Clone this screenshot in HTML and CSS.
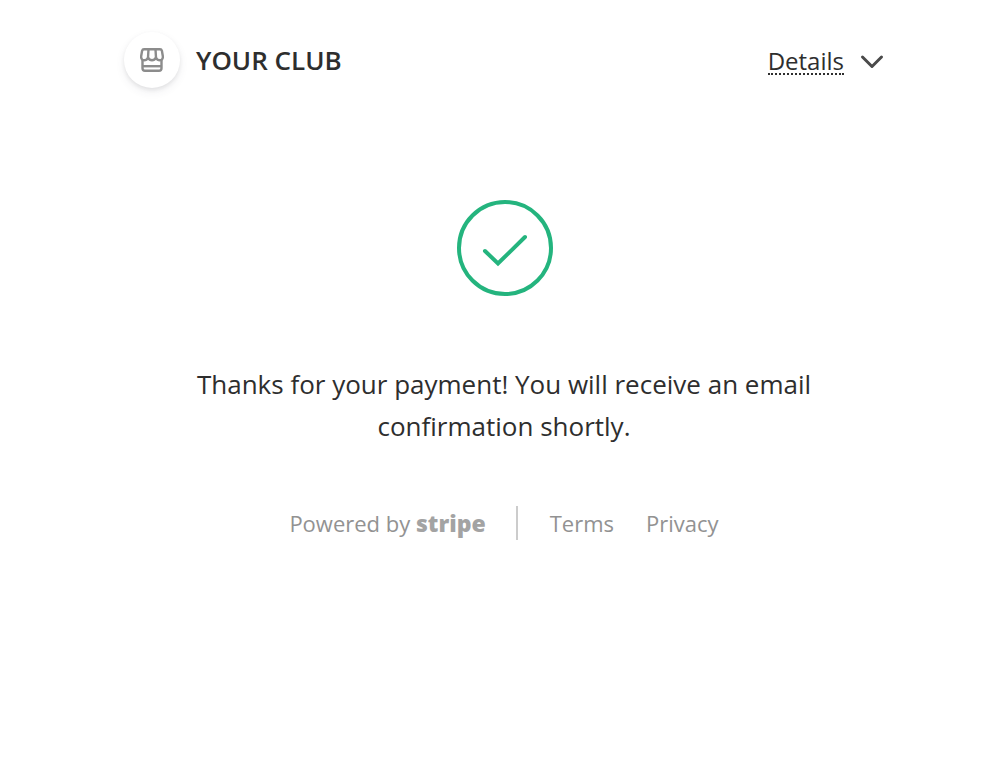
FILE: index.html
```
<!DOCTYPE html>
<html lang="en">

<head>
  <meta charset="UTF-8">
  <meta name="viewport" content="width=device-width, initial-scale=1.0">
  <title>Payment complete</title>

  <link rel="stylesheet" href="styles.css">
</head>

<body>
  <div class="container">
    <header class="header">
      <div class="business">
        <div class="business-icon">
          <svg width="24" height="24" viewBox="0 0 24 24" fill="none" stroke="#8c8c8c" stroke-width="2.400" stroke-linejoin="round">
            <path d="M4 1.200h16q1.500 0 1.900 1.500L22.800 8c.4 2.500-1 4.300-2.900 4.300-1.700 0-3.100-1-3.900-2.600-.9 1.600-2.300 2.600-4 2.600s-3.100-1-4-2.600c-.8 1.600-2.200 2.600-3.900 2.600-1.900 0-3.300-1.800-2.900-4.300l.9-5.300Q2.500 1.200 4 1.200z" />
            <path d="M8.500 1.200L8 9.700M15.500 1.200l.5 8.500" />
            <path d="M2.500 12v8.300q0 2.500 2.500 2.500h14q2.500 0 2.500-2.500V12" />
            <path d="M2.500 18.200h19" />
          </svg>
        </div>
        <h1>YOUR CLUB</h1>
      </div>
      <button class="details-btn" type="button">
        <span>Details</span>
        <svg width="24" height="16" viewBox="0 0 24 16" fill="none" stroke="#4a4a4a" stroke-width="3" stroke-linecap="round" stroke-linejoin="round">
          <path d="M2.500 3l9.500 9.500L21.500 3" />
        </svg>
      </button>
    </header>

    <main class="message">
      <svg width="98" height="96" viewBox="0 0 98 96" fill="none" stroke="#24b47e" stroke-width="4" stroke-linecap="round">
        <circle cx="50" cy="48" r="46" />
        <path d="M30 51l13 12.500L70 37" />
      </svg>
      <p>Thanks for your payment! You will receive an email confirmation shortly.</p>
    </main>

    <footer class="footer">
      <a class="powered" href="#">Powered by <span class="stripe">stripe</span></a>
      <div class="links">
        <a href="#">Terms</a>
        <a href="#">Privacy</a>
      </div>
    </footer>
  </div>
</body>

</html>
```
FILE: styles.css
```
body {
  font-family: "Open Sans", "Noto Sans", sans-serif;
  background: white;
  color: #2e2e2e;
  margin: 0;
}

.container {
  max-width: 760px;
  margin: 0 auto;
  padding: 32px 24px;
}

.header {
  display: flex;
  justify-content: space-between;
  align-items: center;
}

.business {
  display: flex;
  align-items: center;
  gap: 16px;
}

.business-icon {
  display: flex;
  justify-content: center;
  align-items: center;
  width: 56px;
  height: 56px;
  border-radius: 50%;
  box-shadow: 0 4px 10px rgba(60, 66, 87, 0.08), 0 2px 4px rgba(0, 0, 0, 0.08);
}

h1 {
  margin: 0;
  font-size: 26px;
  font-weight: 600;
  line-height: 40px;
}

.details-btn {
  display: flex;
  align-items: center;
  gap: 16px;
  padding: 4px 0 0;
  border: none;
  background: none;
  color: #2e2e2e;
  font-family: inherit;
  font-size: 24px;
  cursor: pointer;
}

.details-btn span {
  line-height: 24px;
  border-bottom: 2px dotted #2e2e2e;
}

.message {
  display: flex;
  flex-direction: column;
  align-items: center;
  gap: 67px;
  margin-top: 112px;
}

.message p {
  max-width: 640px;
  margin: 0;
  font-size: 26px;
  line-height: 42px;
  text-align: center;
}

.footer {
  display: flex;
  justify-content: center;
  align-items: center;
  margin-top: 59px;
  font-size: 22px;
  line-height: 34px;
}

.footer a {
  color: #929292;
  text-decoration: none;
}

.powered {
  padding-right: 30px;
}

.stripe {
  color: #a3a3a3;
  font-size: 23px;
  font-weight: 800;
}

.links {
  display: flex;
  gap: 32px;
  padding-left: 32px;
  border-left: 2px solid #cccccc;
}
```
